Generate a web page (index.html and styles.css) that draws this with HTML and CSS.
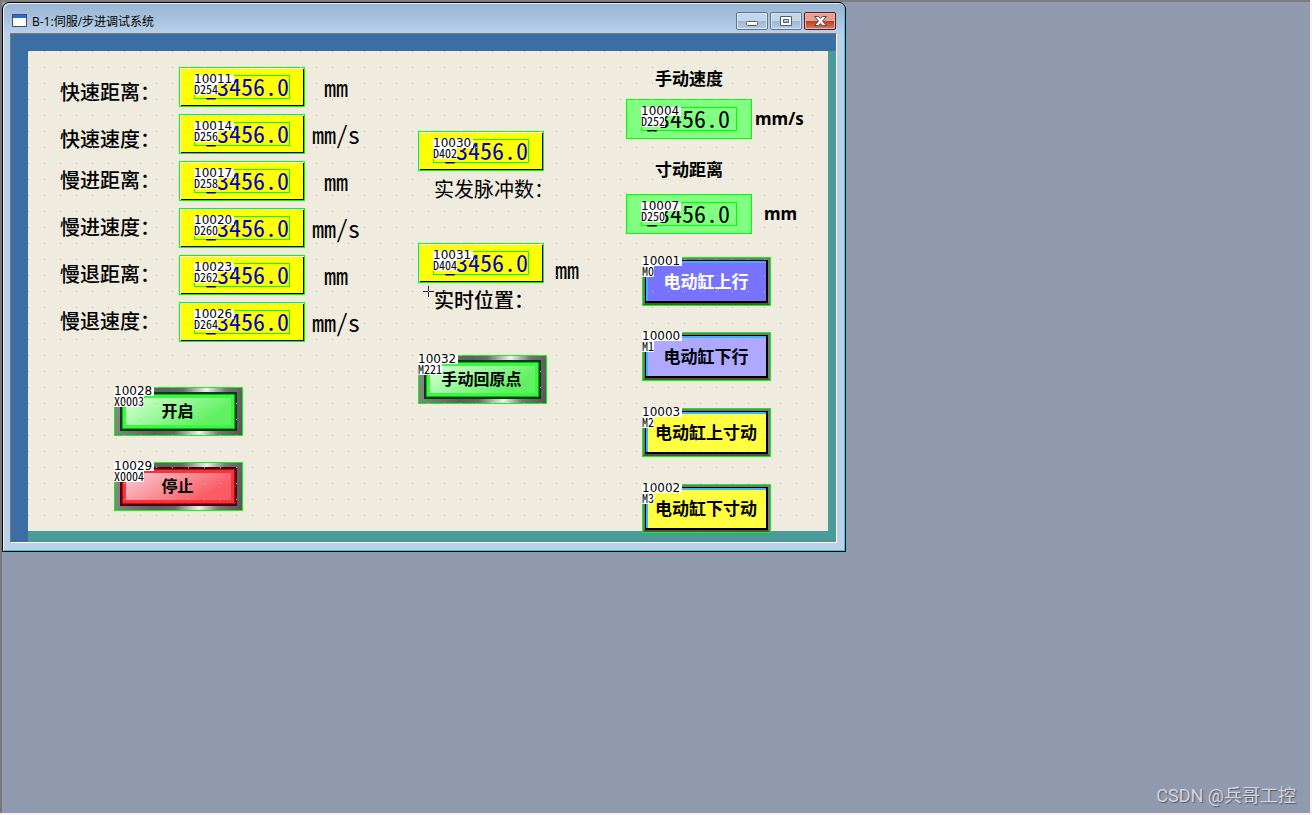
FILE: index.html
```html
<!DOCTYPE html>
<html lang="zh-CN">
<head>
<meta charset="utf-8">
<title>B-1:伺服/步进调试系统</title>
<link rel="stylesheet" href="styles.css">
</head>
<body>
<main class="desktop">
  <section class="window">
    <header class="titlebar">
      <svg class="app-icon" width="15" height="13" viewBox="0 0 15 13"><rect x=".5" y=".5" width="14" height="12" fill="#fff" stroke="#3c5068"/><path d="M1 1h13v3H1z" fill="#1c6cf0"/></svg>
      <h1 class="title">B-1:伺服/步进调试系统</h1>
      <div class="controls">
        <button class="ctl" aria-label="最小化"><svg width="30" height="16" viewBox="0 0 30 16"><rect x="9.500" y="8.500" width="11" height="4" rx="1" fill="#fff" stroke="#525c6c"/></svg></button>
        <button class="ctl" aria-label="最大化"><svg width="30" height="16" viewBox="0 0 30 16"><path d="M9.500 3.500h11v9h-11zM12.500 6.500v3h5v-3z" fill="#fff" fill-rule="evenodd" stroke="#525c6c"/></svg></button>
        <button class="ctl close" aria-label="关闭"><svg width="30" height="16" viewBox="0 0 30 16"><path d="M9.500 3.500h4l2 2 2-2h4l-4 4.500 4 4.500h-4l-2-2-2 2h-4l4-4.500z" fill="#fff" stroke="#5f4048"/></svg></button>
      </div>
    </header>
    <div class="client">
      <div class="screen">
        <span class="label bold at-l1">快速距离：</span>
        <span class="label bold at-l2">快速速度：</span>
        <span class="label bold at-l3">慢进距离：</span>
        <span class="label bold at-l4">慢进速度：</span>
        <span class="label bold at-l5">慢退距离：</span>
        <span class="label bold at-l6">慢退速度：</span>

        <div class="readout at-r1"><output class="value">_3456.0</output><span class="tag"><b>10011</b><em>D254</em></span></div>
        <div class="readout at-r2"><output class="value">_3456.0</output><span class="tag"><b>10014</b><em>D256</em></span></div>
        <div class="readout at-r3"><output class="value">_3456.0</output><span class="tag"><b>10017</b><em>D258</em></span></div>
        <div class="readout at-r4"><output class="value">_3456.0</output><span class="tag"><b>10020</b><em>D260</em></span></div>
        <div class="readout at-r5"><output class="value">_3456.0</output><span class="tag"><b>10023</b><em>D262</em></span></div>
        <div class="readout at-r6"><output class="value">_3456.0</output><span class="tag"><b>10026</b><em>D264</em></span></div>

        <span class="unit at-u1">mm</span>
        <span class="unit at-u2">mm/s</span>
        <span class="unit at-u3">mm</span>
        <span class="unit at-u4">mm/s</span>
        <span class="unit at-u5">mm</span>
        <span class="unit at-u6">mm/s</span>

        <div class="readout at-pulse"><output class="value">_3456.0</output><span class="tag"><b>10030</b><em>D402</em></span></div>
        <span class="label at-pulse-label">实发脉冲数：</span>
        <div class="readout at-pos"><output class="value">_3456.0</output><span class="tag"><b>10031</b><em>D404</em></span></div>
        <span class="unit at-pos-unit">mm</span>
        <span class="label bold at-pos-label">实时位置：</span>
        <svg class="cross" width="11" height="11" viewBox="0 0 11 11"><path d="M5.500 0v11M0 5.500h11" stroke="#223"/></svg>

        <span class="heading at-h1">手动速度</span>
        <div class="readout green at-g1"><output class="value">_3456.0</output><span class="tag"><b>10004</b><em>D252</em></span></div>
        <span class="unit-bold at-gu1">mm/s</span>
        <span class="heading at-h2">寸动距离</span>
        <div class="readout green at-g2"><output class="value">_3456.0</output><span class="tag"><b>10007</b><em>D250</em></span></div>
        <span class="unit-bold at-gu2">mm</span>

        <div class="slot at-b1"><button class="key violet"><span>电动缸上行</span></button><span class="tag"><b>10001</b><em>M0</em></span></div>
        <div class="slot at-b2"><button class="key lilac"><span>电动缸下行</span></button><span class="tag"><b>10000</b><em>M1</em></span></div>
        <div class="slot at-b3"><button class="key yellow"><span>电动缸上寸动</span></button><span class="tag"><b>10003</b><em>M2</em></span></div>
        <div class="slot at-b4"><button class="key yellow"><span>电动缸下寸动</span></button><span class="tag"><b>10002</b><em>M3</em></span></div>

        <div class="slot at-start"><button class="metal go"><span>开启</span></button><span class="tag"><b>10028</b><em>X0003</em></span></div>
        <div class="slot at-stop"><button class="metal halt"><span>停止</span></button><span class="tag"><b>10029</b><em>X0004</em></span></div>
        <div class="slot at-home"><button class="metal go"><span>手动回原点</span></button><span class="tag"><b>10032</b><em>M221</em></span></div>
        <div class="dots"></div>
      </div>
    </div>
  </section>
  <p class="watermark">CSDN @兵哥工控</p>
</main>
</body>
</html>
```
FILE: styles.css
```css
* { box-sizing: border-box; }
body { margin: 0; background: #f4f4f4; font-family: "Liberation Sans", "Noto Sans CJK SC", sans-serif; color: #000; }
button { font: inherit; padding: 0; border: 0; margin: 0; }

.desktop {
  position: relative;
  height: calc(100vh - 2px);
  margin-right: 2px;
  background: #9199ae;
  border-top: 2px solid #7d7d7d;
  border-left: 2px solid #77777a;
  overflow: hidden;
}

/* window frame */
.window {
  position: absolute;
  left: 0;
  top: 0;
  width: 844px;
  padding: 1px 8px 8px 7px;
  border: 1px solid #000;
  border-radius: 7px 7px 0 0;
  background: linear-gradient(#98b4d2, #bad1ea 32px, #bad1ea);
  box-shadow: inset 1px 1px 0 #e8f2fb, inset -1px -1px 0 #2bd0e4;
}
.titlebar { display: flex; align-items: center; gap: 5px; height: 29px; padding: 4px 1px 0 2px; }
.app-icon { flex: none; }
.title { flex: 1; margin: 0; padding-top: 2px; font: 12px/18px "Open Sans", "Noto Sans CJK SC", sans-serif; }
.controls { display: flex; gap: 2px; }
.ctl {
  display: flex;
  width: 32px;
  height: 18px;
  border: 1px solid #5c7593;
  border-radius: 2px;
  background: linear-gradient(#c3d5e8 50%, #9db6d1 50%, #b7cde4);
  box-shadow: inset 0 0 0 1px #d5e3f2;
}
.close { border-color: #5a1a1c; background: linear-gradient(#e2a293 48%, #b93c24 50%, #d07c62); box-shadow: inset 0 0 0 1px #e8b5a8; }

.client {
  padding: 17px 8px 11px 17px;
  border: 1px solid;
  border-color: #77787a #fff #fff #77787a;
  background:
    linear-gradient(#3b6ea5, #3b6ea5) 0 0 / 100% 17px no-repeat,
    linear-gradient(#3b6ea5, #3b6ea5) 0 0 / 17px 100% no-repeat,
    #4a9a9a;
}

/* operator panel: a free canvas of placed parts */
.screen { position: relative; width: 800px; height: 480px; background: #efebdf; }
.screen > * { position: absolute; }
.dots { inset: 0; pointer-events: none; background: conic-gradient(at 1px 1px, transparent 75%, #c3bfb8 0) 0 0 / 16px 16px; }

.label { font: 20px/24px "Noto Sans CJK SC", sans-serif; white-space: nowrap; }
.bold { font-weight: 500; }
.heading { font: bold 17px/20px "Noto Sans CJK SC", sans-serif; white-space: nowrap; }
.unit { font: 24px/24px "Noto Sans Mono CJK SC", "Liberation Mono", monospace; }
.unit-bold { font: bold 17px/20px "Noto Sans", sans-serif; }

.readout {
  width: 126px;
  height: 40px;
  padding: 7px 14px;
  border: 1px solid #0f0;
  background: #ff0;
  box-shadow: inset 1px 1px 0 #fff, inset -1px -1px 0 #000;
}
.value {
  display: flex;
  justify-content: flex-end;
  width: 96px;
  height: 24px;
  border: 1px solid #0f0;
  font: 24px/20px "Noto Sans Mono CJK SC", "Noto Sans CJK SC", sans-serif;
  white-space: pre;
  color: #00c;
}
.green { background: #80ff80; box-shadow: none; }
.green .value { padding-right: 6px; color: #000; }

.tag { position: absolute; left: 14px; top: 7px; display: flex; flex-direction: column; align-items: flex-start; color: #000; }
.tag b { width: 40px; height: 9px; background: #fff; font: 12px/9px "DejaVu Sans", sans-serif; }
.tag em { height: 11px; background: #fff; font: 12px/10px "Noto Sans Mono CJK SC", "Noto Sans CJK SC", sans-serif; }

.slot { width: 129px; height: 49px; border: 1px solid #0f0; }
.slot > .tag { left: -1px; top: -1px; }
.slot button { display: block; width: 100%; height: 100%; }
.slot .key { padding: 1px 2px 2px 1px; border: 2px solid #777; border-bottom-color: #545434; background: #000; font: bold 17px/20px "Noto Sans CJK SC", sans-serif; }
.key span { display: flex; align-items: center; justify-content: center; height: 100%; padding: 0 2px 3px 0; border: solid #3bb4ff; border-width: 2px 0 0 2px; }
.violet span { background: #7873ff; color: #fff; }
.lilac span { background: #aea9ff; }
.yellow span { background: #ffff40; }

.slot .metal { padding: 4px 5px; font: bold 16px/20px "Noto Sans CJK SC", sans-serif; background: linear-gradient(100deg, #8a8a8a, #606060 35%, #686868 50%, #f0f0f0 68%, #777 82%, #555); }
.metal span { display: flex; align-items: center; justify-content: center; height: 100%; padding: 0 2px 4px 0; border: 2px solid #073c10; box-shadow: inset 0 0 0 1px #10b020, inset 0 0 0 4px #38f840; }
.go span { background: linear-gradient(150deg, #c8ffc8 15%, #60f060 75%); }
.halt span { border-color: #4a0508; background: linear-gradient(150deg, #f8c0c8 15%, #fa5c66 75%); box-shadow: inset 0 0 0 1px #b01018, inset 0 0 0 4px #fa3038; }

/* part positions on the canvas */
.at-l1 { left: 32px; top: 29px; }
.at-l2 { left: 32px; top: 76px; }
.at-l3 { left: 32px; top: 117px; }
.at-l4 { left: 32px; top: 164px; }
.at-l5 { left: 32px; top: 211px; }
.at-l6 { left: 32px; top: 258px; }
.at-r1 { left: 151px; top: 16px; }
.at-r2 { left: 151px; top: 63px; }
.at-r3 { left: 151px; top: 110px; }
.at-r4 { left: 151px; top: 157px; }
.at-r5 { left: 151px; top: 204px; }
.at-r6 { left: 151px; top: 251px; }
.at-u1 { left: 296px; top: 24px; }
.at-u2 { left: 284px; top: 71px; }
.at-u3 { left: 296px; top: 118px; }
.at-u4 { left: 284px; top: 165px; }
.at-u5 { left: 296px; top: 212px; }
.at-u6 { left: 284px; top: 259px; }
.at-pulse { left: 390px; top: 80px; }
.at-pulse-label { left: 406px; top: 126px; }
.at-pos { left: 390px; top: 192px; }
.at-pos-unit { left: 527px; top: 206px; }
.at-pos-label { left: 406px; top: 237px; }
.cross { left: 395px; top: 235px; }
.at-h1 { left: 627px; top: 17px; }
.at-g1 { left: 598px; top: 48px; }
.at-gu1 { left: 727px; top: 58px; }
.at-h2 { left: 627px; top: 108px; }
.at-g2 { left: 598px; top: 143px; }
.at-gu2 { left: 736px; top: 153px; }
.at-b1 { left: 614px; top: 206px; }
.at-b2 { left: 614px; top: 281px; }
.at-b3 { left: 614px; top: 357px; }
.at-b4 { left: 614px; top: 433px; }
.at-start { left: 86px; top: 336px; }
.at-stop { left: 86px; top: 411px; }
.at-home { left: 390px; top: 304px; }

.watermark {
  position: absolute;
  right: 14px;
  bottom: 4px;
  margin: 0;
  font: 18px/26px Roboto, "Noto Sans CJK SC", sans-serif;
  color: #d2d5dc;
  text-shadow: 1px 1px 1px #555b6a;
}
```
